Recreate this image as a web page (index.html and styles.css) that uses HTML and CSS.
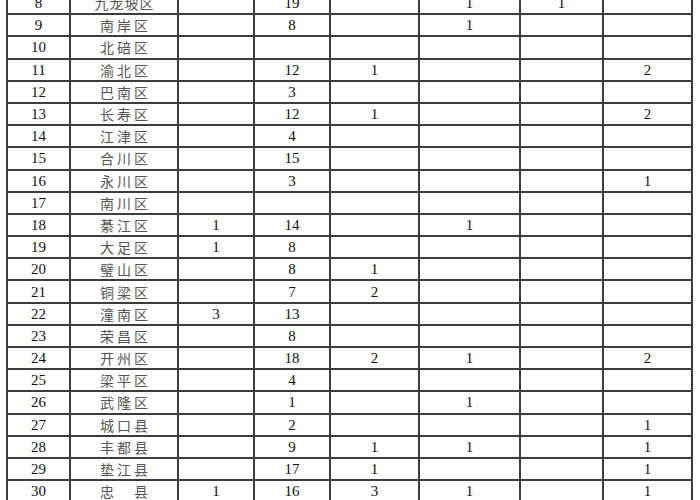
FILE: index.html
```html
<!DOCTYPE html>
<html lang="zh-CN">
<head>
<meta charset="utf-8">
<link rel="stylesheet" href="styles.css">
</head>
<body>
<table class="grid">
<colgroup>
<col class="c-no"><col class="c-name"><col class="c-a"><col class="c-b"><col class="c-c"><col class="c-d"><col class="c-e"><col class="c-f">
</colgroup>
<tbody>
<tr><td>8</td><td class="name four">九龙坡区</td><td></td><td>19</td><td></td><td>1</td><td>1</td><td></td></tr>
<tr><td>9</td><td class="name">南岸区</td><td></td><td>8</td><td></td><td>1</td><td></td><td></td></tr>
<tr><td>10</td><td class="name">北碚区</td><td></td><td></td><td></td><td></td><td></td><td></td></tr>
<tr><td>11</td><td class="name">渝北区</td><td></td><td>12</td><td>1</td><td></td><td></td><td>2</td></tr>
<tr><td>12</td><td class="name">巴南区</td><td></td><td>3</td><td></td><td></td><td></td><td></td></tr>
<tr><td>13</td><td class="name">长寿区</td><td></td><td>12</td><td>1</td><td></td><td></td><td>2</td></tr>
<tr><td>14</td><td class="name">江津区</td><td></td><td>4</td><td></td><td></td><td></td><td></td></tr>
<tr><td>15</td><td class="name">合川区</td><td></td><td>15</td><td></td><td></td><td></td><td></td></tr>
<tr><td>16</td><td class="name">永川区</td><td></td><td>3</td><td></td><td></td><td></td><td>1</td></tr>
<tr><td>17</td><td class="name">南川区</td><td></td><td></td><td></td><td></td><td></td><td></td></tr>
<tr><td>18</td><td class="name">綦江区</td><td>1</td><td>14</td><td></td><td>1</td><td></td><td></td></tr>
<tr><td>19</td><td class="name">大足区</td><td>1</td><td>8</td><td></td><td></td><td></td><td></td></tr>
<tr><td>20</td><td class="name">璧山区</td><td></td><td>8</td><td>1</td><td></td><td></td><td></td></tr>
<tr><td>21</td><td class="name">铜梁区</td><td></td><td>7</td><td>2</td><td></td><td></td><td></td></tr>
<tr><td>22</td><td class="name">潼南区</td><td>3</td><td>13</td><td></td><td></td><td></td><td></td></tr>
<tr><td>23</td><td class="name">荣昌区</td><td></td><td>8</td><td></td><td></td><td></td><td></td></tr>
<tr><td>24</td><td class="name">开州区</td><td></td><td>18</td><td>2</td><td>1</td><td></td><td>2</td></tr>
<tr><td>25</td><td class="name">梁平区</td><td></td><td>4</td><td></td><td></td><td></td><td></td></tr>
<tr><td>26</td><td class="name">武隆区</td><td></td><td>1</td><td></td><td>1</td><td></td><td></td></tr>
<tr><td>27</td><td class="name">城口县</td><td></td><td>2</td><td></td><td></td><td></td><td>1</td></tr>
<tr><td>28</td><td class="name">丰都县</td><td></td><td>9</td><td>1</td><td>1</td><td></td><td>1</td></tr>
<tr><td>29</td><td class="name">垫江县</td><td></td><td>17</td><td>1</td><td></td><td></td><td>1</td></tr>
<tr><td>30</td><td class="name">忠　县</td><td>1</td><td>16</td><td>3</td><td>1</td><td></td><td>1</td></tr>
<tr><td>31</td><td class="name">云阳县</td><td></td><td></td><td></td><td></td><td></td><td></td></tr>
</tbody>
</table>
</body>
</html>
```
FILE: styles.css
```css
html, body {
  margin: 0;
  padding: 0;
  background: #fff;
  overflow: hidden;
}
body {
  width: 700px;
  height: 500px;
}
.grid {
  border-collapse: collapse;
  table-layout: fixed;
  width: 685px;
  margin: -9px 0 0 6px;
  font-family: "Liberation Serif", "Noto Sans CJK SC", serif;
  font-size: 15px;
  color: #111;
}
.c-no { width: 63px; }
.c-name { width: 108px; }
.c-a { width: 76px; }
.c-b { width: 76px; }
.c-c { width: 89px; }
.c-d { width: 101px; }
.c-e { width: 83px; }
.c-f { width: 89px; }
.grid td {
  border: 2px solid #3c3c3c;
  height: 22.2px;
  padding: 0;
  text-align: center;
  vertical-align: middle;
  line-height: 16px;
  box-sizing: border-box;
}
.grid td.name {
  font-family: "Noto Sans CJK SC", sans-serif;
  font-size: 14px;
  letter-spacing: 3px;
  text-indent: 3px;
  color: #555;
}
.grid td.four {
  letter-spacing: 1px;
  text-indent: 1px;
}
```
